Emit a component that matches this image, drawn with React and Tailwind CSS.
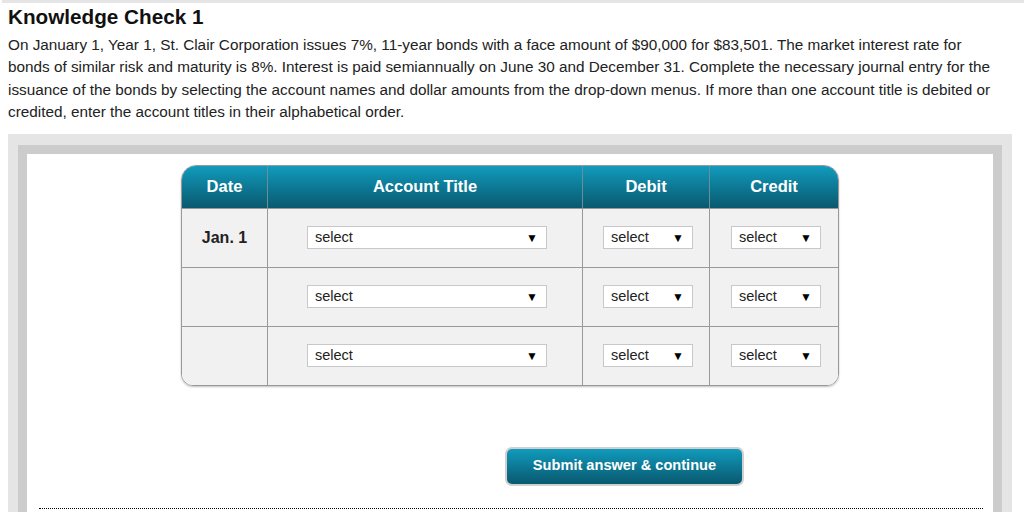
import React from 'react'

const rows = [
  { date: 'Jan. 1' },
  { date: '' },
  { date: '' },
]

function Select({ width }) {
  return (
    <div className={`${width} h-[23px] bg-white border border-[#c8c8c8] flex items-center justify-between pl-[7px] pr-[8px] pt-[1px] text-[14.5px] text-[#222]`}>
      <span>select</span>
      <span className="text-[12px] text-black">▼</span>
    </div>
  )
}

export default function App() {
  return (
    <div className="w-[1024px] h-[512px] overflow-hidden bg-white text-[#222]" style={{ fontFamily: '"Liberation Sans", Arial, sans-serif' }}>
      <div className="h-[3px] ml-[2px] bg-[#e5e5e5]"></div>

      <div className="px-2">
        <h1 className="text-[20.7px] font-bold leading-[24px] mt-[2px] text-[#111]">Knowledge Check 1</h1>
        <p className="text-[15.3px] leading-[22.4px] mt-[5px] pr-[10px] text-[#222]">
          On January 1, Year 1, St. Clair Corporation issues 7%, 11-year bonds with a face amount of $90,000 for $83,501. The market interest rate for bonds of similar risk and maturity is 8%. Interest is paid semiannually on June 30 and December 31. Complete the necessary journal entry for the issuance of the bonds by selecting the account names and dollar amounts from the drop-down menus. If more than one account title is debited or credited, enter the account titles in their alphabetical order.
        </p>
      </div>

      <div className="ml-2 w-[1004px] mt-[10px] border-[10px] border-[#e5e5e5] border-t-[11px]">
        <div className="border-[9px] border-[#cccccc] bg-white h-[400px] pt-[11px]">
          {/* journal table */}
          <div className="mx-auto w-[658px] rounded-t-[15px] rounded-b-[12px] border border-[#999] overflow-hidden shadow-[0_1px_2px_rgba(0,0,0,0.25)]">
            <div className="flex h-[42px] bg-gradient-to-b from-[#119bbd] to-[#09596f] text-white font-bold text-[16.5px]">
              <div className="w-[86px] flex items-center justify-center border-r border-[#6b8f99]">Date</div>
              <div className="w-[315px] flex items-center justify-center border-r border-[#6b8f99]">Account Title</div>
              <div className="w-[127px] flex items-center justify-center border-r border-[#6b8f99]">Debit</div>
              <div className="flex-1 flex items-center justify-center">Credit</div>
            </div>
            {rows.map((r, i) => (
              <div key={i} className="flex h-[59px] bg-[#f1f1f1] border-t border-[#999]">
                <div className="w-[86px] flex items-center justify-center border-r border-[#999] font-bold text-[16px] text-[#222]">{r.date}</div>
                <div className="w-[315px] flex items-center pl-[39px] border-r border-[#999]">
                  <Select width="w-[240px]" />
                </div>
                <div className="w-[127px] flex items-center pl-[20px] border-r border-[#999]">
                  <Select width="w-[90px]" />
                </div>
                <div className="flex-1 flex items-center pl-[21px]">
                  <Select width="w-[90px]" />
                </div>
              </div>
            ))}
          </div>

          <div className="mt-[61px] ml-[478px]">
            <button className="w-[239px] h-[39px] rounded-[7px] border-2 border-[#d0d0d0] bg-gradient-to-b from-[#119bbd] to-[#09596f] text-white font-bold text-[14.6px]">
              Submit answer &amp; continue
            </button>
          </div>

          <div className="mt-[22px] ml-[12px] mr-[10px] border-t border-dotted border-black"></div>
        </div>
      </div>
    </div>
  )
}
